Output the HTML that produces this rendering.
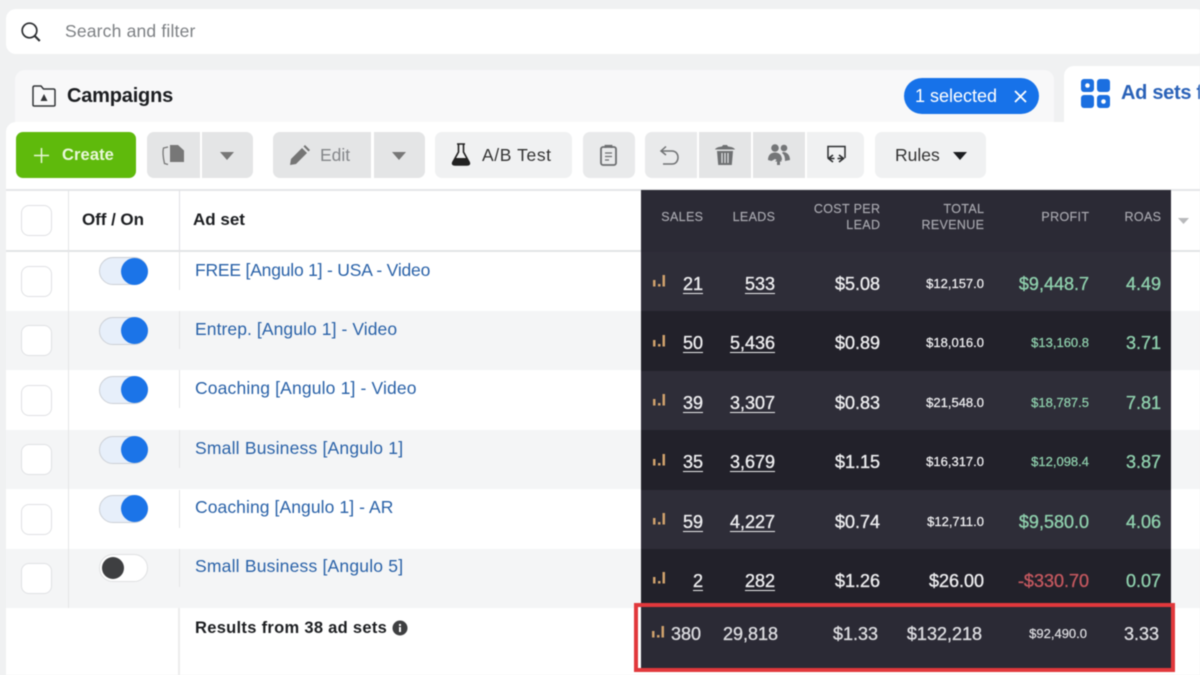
<!DOCTYPE html>
<html><head><meta charset="utf-8">
<style>
html,body{margin:0;padding:0;background:#f0f1f2}
#p{position:relative;width:1200px;height:675px;overflow:hidden;background:#f0f1f2;font-family:"Liberation Sans",sans-serif;color:#1c1e21;filter:blur(.45px)}
#p div,#p svg{position:absolute}
.btn{background:#e4e5e6;top:132px;height:46px}
.btl{background:#f0f1f2;top:132px;height:46px}
.band{left:6px;width:1194px;height:59px}
.cb{left:21px;width:31px;height:31px;box-sizing:border-box;border:1.5px solid #e0e1e4;border-radius:8px;background:#fff}
.tg{left:99px;width:49px;height:28px;box-sizing:border-box;border:1px solid #ccd0d6;border-radius:14px;background:#e7effa}
.kn{left:121px;width:27px;height:27px;border-radius:50%;background:#1b74e8}
.nm{left:195px;font-size:17.5px;line-height:22px;color:#2a62a8;white-space:nowrap}
.dr{left:641px;width:530px;height:60px}
.v{white-space:nowrap;text-align:right;color:#eeeef0;line-height:22px;font-size:18px;-webkit-text-stroke:.35px currentColor}
.u{text-decoration:underline;text-underline-offset:3px;text-decoration-thickness:1.3px}
.sm{font-size:13px;-webkit-text-stroke:.25px currentColor}
.g{color:#8fd0ad}
.h{white-space:nowrap;text-align:right;color:#a9a9b0;font-size:12.5px;line-height:16px;letter-spacing:.35px;margin-right:-.35px;-webkit-text-stroke:.15px currentColor}
.bar{left:653px;width:12px;height:12px}
.lbl{font-size:17.5px;white-space:nowrap;line-height:22px}
</style></head><body><div id="p">

<!-- search bar -->
<div style="left:6px;top:9px;width:1200px;height:45px;background:#fff;border-radius:10px"></div>
<svg style="left:19px;top:20px" width="24" height="24" viewBox="0 0 24 24" fill="none" stroke="#2b2d30" stroke-width="1.7"><circle cx="10.5" cy="10.5" r="7.3"/><path d="M15.8 16l5 5" stroke-width="2.2"/></svg>
<div style="left:65px;top:20px;font-size:17.5px;line-height:22px;color:#7d8084;white-space:nowrap;letter-spacing:.18px">Search and filter</div>

<!-- campaigns tab -->
<div style="left:15px;top:70px;width:1039px;height:70px;background:#f8f8f9;border-radius:10px 10px 0 0"></div>
<svg style="left:31px;top:84px" width="26" height="24" viewBox="0 0 26 24" fill="none" stroke="#333538" stroke-width="1.5"><path d="M2 3.5C2 2.6 2.6 2 3.500 2H10l2.500 3H22.500C23.400 5 24 5.600 24 6.500V21C24 21.800 23.400 22 22.500 22H3.500C2.600 22 2 21.500 2 21Z"/><path d="M13 10l3.500 7h-7z" fill="#333538" stroke="none"/></svg>
<div class="lbl" style="left:67px;top:84px;font-size:20px;line-height:24px;font-weight:700;color:#1c1e21;letter-spacing:-.2px">Campaigns</div>
<div style="left:904px;top:78px;width:135px;height:36px;border-radius:18px;background:#1772e9"></div>
<div class="lbl" style="left:915px;top:84px;color:#fff;line-height:24px;font-size:18px">1 selected</div>
<svg style="left:1013px;top:89px" width="15" height="15" viewBox="0 0 15 15" stroke="#fff" stroke-width="1.800"><path d="M2 2l11 11M13 2L2 13"/></svg>

<!-- ad sets tab -->
<div style="left:1064px;top:66px;width:140px;height:70px;background:#fff;border-radius:10px 0 0 0"></div>
<svg style="left:1081px;top:79px" width="29" height="29" viewBox="0 0 29 29"><rect x="0" y="0" width="13" height="13" rx="3" fill="#1b6fe0"/><rect x="16" y="0" width="13" height="13" rx="3" fill="#1b6fe0"/><rect x="0" y="16" width="13" height="13" rx="3" fill="#1b6fe0"/><rect x="16" y="16" width="13" height="13" rx="3" fill="#1b6fe0"/><circle cx="6.500" cy="6.500" r="2.300" fill="#fff"/><circle cx="22.500" cy="22.500" r="2.300" fill="#fff"/></svg>
<div class="lbl" style="left:1121px;top:81px;font-size:20px;line-height:24px;font-weight:700;color:#2a62b8;letter-spacing:-.3px">Ad sets f</div>

<!-- main panel -->
<div style="left:6px;top:122px;width:1200px;height:560px;background:#fff;border-radius:10px 0 0 0"></div>

<!-- toolbar -->
<div style="left:16px;top:132px;width:120px;height:46px;background:#5fba0c;border-radius:7px"></div>
<svg style="left:34px;top:148px" width="15" height="15" viewBox="0 0 15 15" stroke="#e8f7d8" stroke-width="1.500"><path d="M7.500 0v15M0 7.500h15"/></svg>
<div class="lbl" style="left:62px;top:144px;color:#e9f8da;font-weight:700;font-size:16.500px;letter-spacing:.1px">Create</div>

<div class="btn" style="left:147px;width:53px;border-radius:7px 0 0 7px"></div>
<div class="btn" style="left:202px;width:51px;border-radius:0 7px 7px 0"></div>
<svg style="left:160px;top:143px" width="26" height="24" viewBox="0 0 26 24" fill="#777"><path d="M8 4L3.500 5C2.500 9 3 14 4.500 20.500L8 21.500" fill="none" stroke="#777" stroke-width="1.300"/><path d="M10 2h8l6 5.500V19H10z"/></svg>
<svg style="left:220px;top:152px" width="14" height="8" viewBox="0 0 14 8" fill="#777"><path d="M0 0h14L7 8z"/></svg>

<div class="btn" style="left:273px;width:98px;border-radius:7px 0 0 7px"></div>
<div class="btn" style="left:374px;width:51px;border-radius:0 7px 7px 0"></div>
<svg style="left:288px;top:144px" width="24" height="22" viewBox="0 0 24 22" fill="#757575"><path d="M2 21l1-6L14 4l5 5L8 20z"/><path d="M15.500 2.500l1.500-1.500 5 5-1.500 1.500z"/></svg>
<div class="lbl" style="left:320px;top:144px;color:#85878a">Edit</div>
<svg style="left:392px;top:152px" width="14" height="8" viewBox="0 0 14 8" fill="#777"><path d="M0 0h14L7 8z"/></svg>

<div class="btl" style="left:435px;width:137px;border-radius:7px"></div>
<svg style="left:450px;top:142px" width="22" height="25" viewBox="0 0 22 25"><path d="M7 2h8M8.500 2v8L3 20c-1 2 0 3 2 3h12c2 0 3-1 2-3l-5.500-10V2" fill="none" stroke="#222" stroke-width="1.600"/><path d="M5.500 16h11l3 5c.4 1.500-.5 2-2 2H4.500c-1.500 0-2.400-.5-2-2z" fill="#222"/></svg>
<div class="lbl" style="left:482px;top:144px;color:#333;letter-spacing:.6px">A/B Test</div>

<div class="btn" style="left:583px;width:52px;border-radius:7px;background:#e9eaeb"></div>
<svg style="left:598px;top:143px" width="22" height="24" viewBox="0 0 22 24" fill="none" stroke="#6c6e70" stroke-width="1.800"><rect x="3" y="4" width="15" height="18" rx="2"/><path d="M7.500 5V2.800h6V5"/><path d="M7 10h7M7 13.500h7M7 17h4" stroke-width="1.300"/></svg>

<div class="btn" style="left:645px;width:52px;border-radius:7px 0 0 7px;background:#e9eaeb"></div>
<div class="btn" style="left:699px;width:52px"></div>
<div class="btn" style="left:753px;width:52px"></div>
<div class="btl" style="left:807px;width:57px;border-radius:0 7px 7px 0"></div>
<svg style="left:658px;top:144px" width="24" height="23" viewBox="0 0 24 23" fill="none" stroke="#707274" stroke-width="1.500"><path d="M8 2.500L3 7l5 4"/><path d="M3 7h11c8 0 8 13 0 13H5"/></svg>
<svg style="left:714px;top:143px" width="22" height="24" viewBox="0 0 22 24" fill="#6f7173"><path d="M1 6.500C2 4.500 5 3.800 8 3.500L9 2h4l1 1.500c3 .3 6 1 7 3z"/><path d="M3 8h16l-1.200 14H4.200z"/><path d="M8 10v10M11 10v10M14 10v10" stroke="#e4e5e6" stroke-width="1.200"/></svg>
<svg style="left:767px;top:143px" width="24" height="22" viewBox="0 0 24 22" fill="#747678"><circle cx="8" cy="5" r="3.800"/><circle cx="17" cy="5" r="3.300"/><path d="M1 17c0-5 3-7.500 7-7.500s7 2.500 7 7.500l-3.500 1-3.500-2-3.500 2z"/><path d="M16 9c4 0 7 3 7 8l-5 1c0-4-.5-6-3-8z"/><path d="M11.500 15l3.500 3.500h-2V22h-3v-3.500H8z"/></svg>
<svg style="left:824px;top:144px" width="24" height="22" viewBox="0 0 24 22" fill="none" stroke="#2d2f31" stroke-width="1.500"><path d="M4 14V2.500h17V14"/><path d="M2.500 14l5 6" stroke-width="0"/><path d="M9 11L4.500 14.500 9 18M4.500 14.500h6M15 11l4.500 3.500L15 18M19.500 14.500h-6" stroke-width="1.600"/></svg>

<div class="btl" style="left:875px;width:111px;border-radius:7px"></div>
<div class="lbl" style="left:895px;top:144px;color:#333">Rules</div>
<svg style="left:953px;top:152px" width="14" height="8" viewBox="0 0 14 8" fill="#1c1e21"><path d="M0 0h14L7 8z"/></svg>

<!-- row bands -->
<div style="left:6px;top:189px;width:1194px;height:2px;background:#e5e6e8"></div>
<div style="left:6px;top:250px;width:1194px;height:2px;background:#e3e4e6"></div>
<div class="band" style="top:311px;background:#f4f5f6"></div>
<div class="band" style="top:430px;background:#f4f5f6"></div>
<div class="band" style="top:549px;background:#f4f5f6"></div>

<!-- column lines -->
<div style="left:68px;top:190px;width:1px;height:418px;background:#e4e5e7"></div>
<div style="left:179px;top:190px;width:1px;height:60px;background:#e0e1e3"></div>
<div style="left:179px;top:252px;width:1px;height:38px;background:#e4e5e7"></div>
<div style="left:179px;top:311px;width:1px;height:38px;background:#e4e5e7"></div>
<div style="left:179px;top:370px;width:1px;height:38px;background:#e4e5e7"></div>
<div style="left:179px;top:430px;width:1px;height:38px;background:#e4e5e7"></div>
<div style="left:179px;top:490px;width:1px;height:38px;background:#e4e5e7"></div>
<div style="left:179px;top:549px;width:1px;height:38px;background:#e4e5e7"></div>
<div style="left:178px;top:608px;width:2px;height:67px;background:#eceded"></div>

<!-- header left -->
<div class="cb" style="top:205px"></div>
<div class="lbl" style="left:82px;top:209px;font-weight:700;font-size:17px;letter-spacing:-.05px">Off / On</div>
<div class="lbl" style="left:193px;top:209px;font-weight:700;font-size:17px">Ad set</div>

<!-- checkboxes -->
<div class="cb" style="top:266px"></div>
<div class="cb" style="top:325px"></div>
<div class="cb" style="top:385px"></div>
<div class="cb" style="top:444px"></div>
<div class="cb" style="top:504px"></div>
<div class="cb" style="top:563px"></div>

<!-- toggles -->
<div class="tg" style="top:257px"></div><div class="kn" style="top:258px"></div>
<div class="tg" style="top:317px"></div><div class="kn" style="top:317px"></div>
<div class="tg" style="top:376px"></div><div class="kn" style="top:376px"></div>
<div class="tg" style="top:436px"></div><div class="kn" style="top:436px"></div>
<div class="tg" style="top:495px"></div><div class="kn" style="top:495px"></div>
<div class="tg" style="top:554px;background:#fff;border-color:#dfe0e2"></div><div style="left:102px;top:557px;width:22px;height:22px;border-radius:50%;background:#3e3f41"></div>

<!-- names -->
<div class="nm" style="top:259px;letter-spacing:-.2px">FREE [Angulo 1] - USA - Video</div>
<div class="nm" style="top:318px;letter-spacing:.08px">Entrep. [Angulo 1] - Video</div>
<div class="nm" style="top:377px;letter-spacing:.15px">Coaching [Angulo 1] - Video</div>
<div class="nm" style="top:437px;letter-spacing:.2px">Small Business [Angulo 1]</div>
<div class="nm" style="top:496px;letter-spacing:.08px">Coaching [Angulo 1] - AR</div>
<div class="nm" style="top:555px;letter-spacing:.2px">Small Business [Angulo 5]</div>

<div class="lbl" style="left:195px;top:617px;font-weight:700;font-size:16.500px;letter-spacing:.3px">Results from 38 ad sets</div>
<svg style="left:392px;top:620px" width="16" height="16" viewBox="0 0 16 16"><circle cx="8" cy="8" r="7.500" fill="#3e3f41"/><rect x="7" y="7" width="2" height="5" fill="#fff"/><rect x="7" y="4" width="2" height="2" fill="#fff"/></svg>

<!-- dark panel -->
<div style="left:641px;top:190px;width:530px;height:62px;background:#2b2a35"></div>
<div class="dr" style="top:252px;background:#2e2d38"></div>
<div class="dr" style="top:311px;background:#22212a"></div>
<div class="dr" style="top:371px;background:#2e2d38"></div>
<div class="dr" style="top:430px;background:#22212a"></div>
<div class="dr" style="top:490px;background:#2e2d38"></div>
<div class="dr" style="top:549px;background:#22212a"></div>
<div class="dr" style="top:607px;height:61px;background:#2b2a35"></div>

<!-- headers -->
<div class="h" style="right:497px;top:209px">SALES</div>
<div class="h" style="right:425px;top:209px">LEADS</div>
<div class="h" style="right:320px;top:201px">COST PER<br>LEAD</div>
<div class="h" style="right:216px;top:201px">TOTAL<br>REVENUE</div>
<div class="h" style="right:111px;top:209px">PROFIT</div>
<div class="h" style="right:39px;top:209px">ROAS</div>
<svg style="left:1178px;top:218px" width="11" height="6" viewBox="0 0 11 6" fill="#b8b9bb"><path d="M0 0h11L5.500 6z"/></svg>

<!-- row 1 -->
<svg class="bar" style="top:275px" viewBox="0 0 12 12" fill="#cfa16c"><rect x="0" y="5" width="2.500" height="6.500"/><rect x="5" y="9" width="2.500" height="2.500"/><rect x="9.500" y="0" width="2.500" height="11.500"/></svg>
<div class="v u" style="right:497px;top:273px">21</div>
<div class="v u" style="right:425px;top:273px">533</div>
<div class="v" style="right:320px;top:273px">$5.08</div>
<div class="v sm" style="right:216px;top:273px">$12,157.0</div>
<div class="v g" style="right:111px;top:273px">$9,448.7</div>
<div class="v g" style="right:39px;top:273px">4.49</div>
<!-- row 2 -->
<svg class="bar" style="top:335px" viewBox="0 0 12 12" fill="#cfa16c"><rect x="0" y="5" width="2.500" height="6.500"/><rect x="5" y="9" width="2.500" height="2.500"/><rect x="9.500" y="0" width="2.500" height="11.500"/></svg>
<div class="v u" style="right:497px;top:332px">50</div>
<div class="v u" style="right:425px;top:332px">5,436</div>
<div class="v" style="right:320px;top:332px">$0.89</div>
<div class="v sm" style="right:216px;top:332px">$18,016.0</div>
<div class="v sm g" style="right:111px;top:332px">$13,160.8</div>
<div class="v g" style="right:39px;top:332px">3.71</div>
<!-- row 3 -->
<svg class="bar" style="top:394px" viewBox="0 0 12 12" fill="#cfa16c"><rect x="0" y="5" width="2.500" height="6.500"/><rect x="5" y="9" width="2.500" height="2.500"/><rect x="9.500" y="0" width="2.500" height="11.500"/></svg>
<div class="v u" style="right:497px;top:392px">39</div>
<div class="v u" style="right:425px;top:392px">3,307</div>
<div class="v" style="right:320px;top:392px">$0.83</div>
<div class="v sm" style="right:216px;top:392px">$21,548.0</div>
<div class="v sm g" style="right:111px;top:392px">$18,787.5</div>
<div class="v g" style="right:39px;top:392px">7.81</div>
<!-- row 4 -->
<svg class="bar" style="top:454px" viewBox="0 0 12 12" fill="#cfa16c"><rect x="0" y="5" width="2.500" height="6.500"/><rect x="5" y="9" width="2.500" height="2.500"/><rect x="9.500" y="0" width="2.500" height="11.500"/></svg>
<div class="v u" style="right:497px;top:451px">35</div>
<div class="v u" style="right:425px;top:451px">3,679</div>
<div class="v" style="right:320px;top:451px">$1.15</div>
<div class="v sm" style="right:216px;top:451px">$16,317.0</div>
<div class="v sm g" style="right:111px;top:451px">$12,098.4</div>
<div class="v g" style="right:39px;top:451px">3.87</div>
<!-- row 5 -->
<svg class="bar" style="top:513px" viewBox="0 0 12 12" fill="#cfa16c"><rect x="0" y="5" width="2.500" height="6.500"/><rect x="5" y="9" width="2.500" height="2.500"/><rect x="9.500" y="0" width="2.500" height="11.500"/></svg>
<div class="v u" style="right:497px;top:511px">59</div>
<div class="v u" style="right:425px;top:511px">4,227</div>
<div class="v" style="right:320px;top:511px">$0.74</div>
<div class="v sm" style="right:216px;top:511px">$12,711.0</div>
<div class="v g" style="right:111px;top:511px">$9,580.0</div>
<div class="v g" style="right:39px;top:511px">4.06</div>
<!-- row 6 -->
<svg class="bar" style="top:572px" viewBox="0 0 12 12" fill="#cfa16c"><rect x="0" y="5" width="2.500" height="6.500"/><rect x="5" y="9" width="2.500" height="2.500"/><rect x="9.500" y="0" width="2.500" height="11.500"/></svg>
<div class="v u" style="right:497px;top:570px">2</div>
<div class="v u" style="right:425px;top:570px">282</div>
<div class="v" style="right:320px;top:570px">$1.26</div>
<div class="v" style="right:216px;top:570px">$26.00</div>
<div class="v" style="right:111px;top:570px;color:#c4585f">-$330.70</div>
<div class="v g" style="right:39px;top:570px">0.07</div>
<!-- totals -->
<svg class="bar" style="top:626px;left:652px" viewBox="0 0 12 12" fill="#cfa16c"><rect x="0" y="5" width="2.500" height="6.500"/><rect x="5" y="9" width="2.500" height="2.500"/><rect x="9.500" y="0" width="2.500" height="11.500"/></svg>
<div class="v" style="right:499px;top:623px;color:#dcdce0">380</div>
<div class="v" style="right:422px;top:623px;color:#dcdce0">29,818</div>
<div class="v" style="right:322px;top:623px;color:#dcdce0">$1.33</div>
<div class="v" style="right:218px;top:623px;color:#dcdce0">$132,218</div>
<div class="v sm" style="right:113px;top:623px;color:#dcdce0">$92,490.0</div>
<div class="v" style="right:41px;top:623px;color:#dcdce0">3.33</div>

<!-- red box -->
<div style="left:634px;top:603px;width:541px;height:69px;box-sizing:border-box;border:4px solid #e1383c"></div>

</div></body></html>
